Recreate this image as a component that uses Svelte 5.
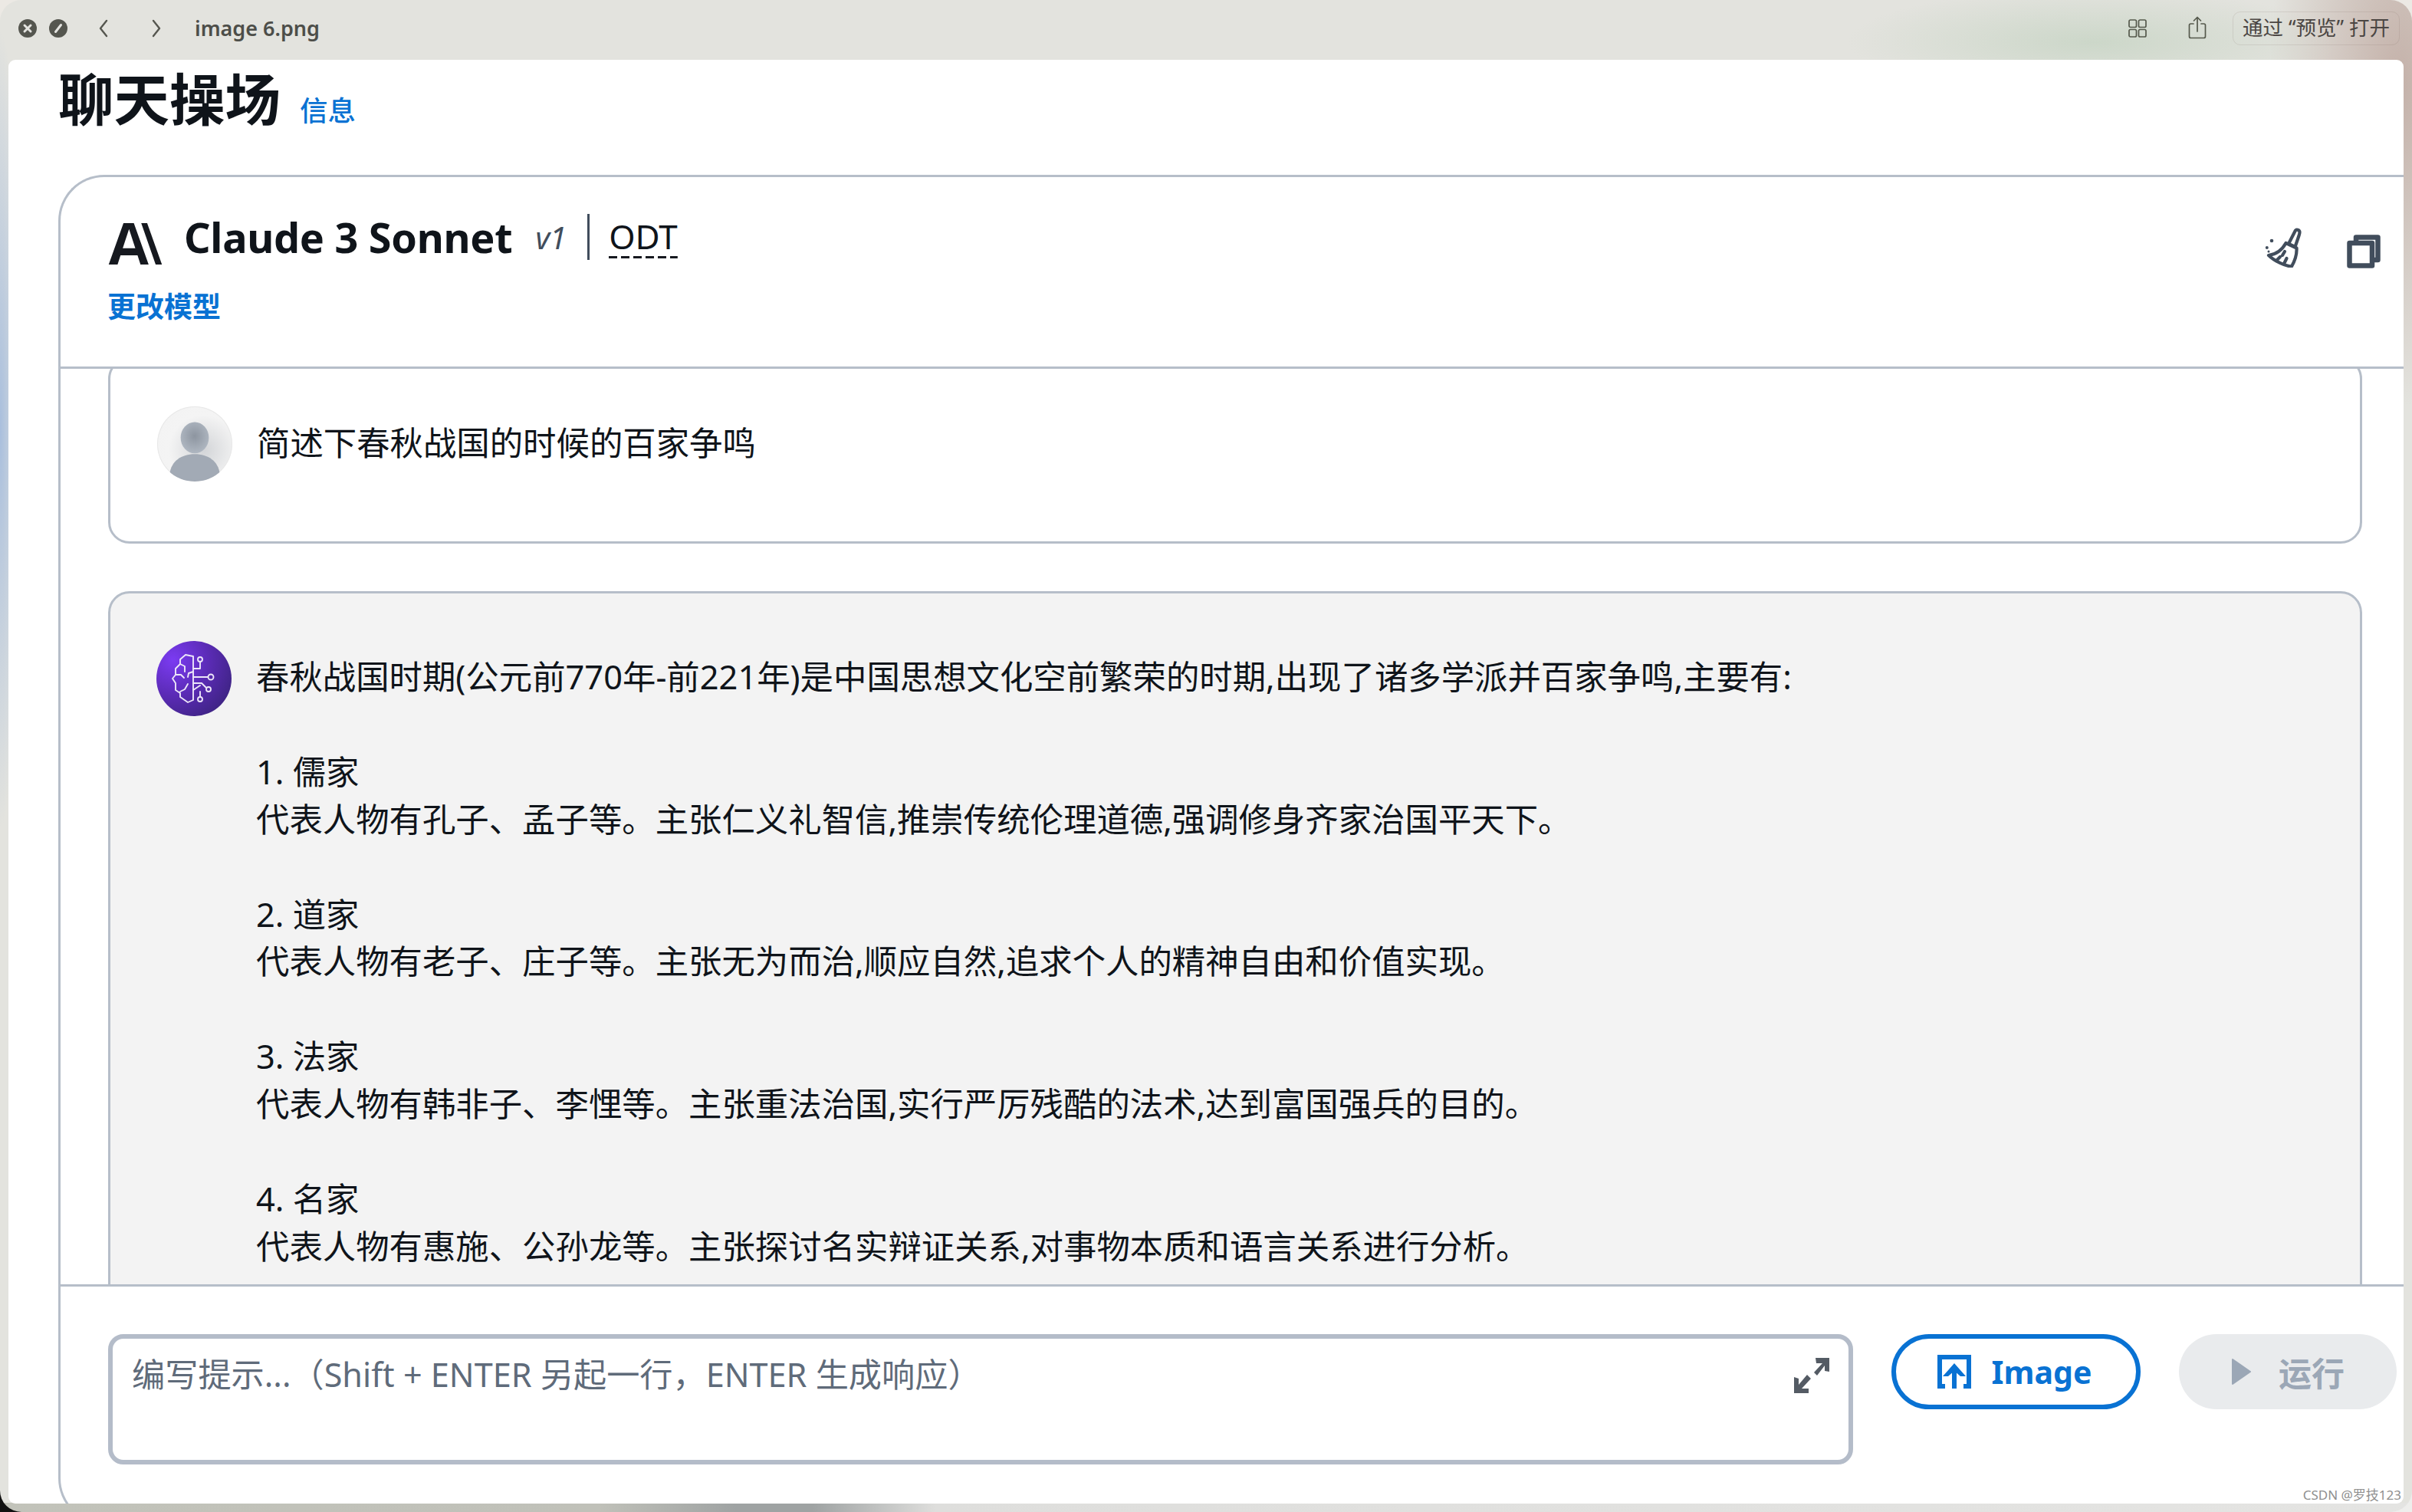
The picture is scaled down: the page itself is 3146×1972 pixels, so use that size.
<script>
  const answer = [
    '春秋战国时期(公元前770年-前221年)是中国思想文化空前繁荣的时期,出现了诸多学派并百家争鸣,主要有:',
    '',
    '1. 儒家',
    '代表人物有孔子、孟子等。主张仁义礼智信,推崇传统伦理道德,强调修身齐家治国平天下。',
    '',
    '2. 道家',
    '代表人物有老子、庄子等。主张无为而治,顺应自然,追求个人的精神自由和价值实现。',
    '',
    '3. 法家',
    '代表人物有韩非子、李悝等。主张重法治国,实行严厉残酷的法术,达到富国强兵的目的。',
    '',
    '4. 名家',
    '代表人物有惠施、公孙龙等。主张探讨名实辩证关系,对事物本质和语言关系进行分析。'
  ].join('\n');
</script>

<div class="window">
  <header class="titlebar">
    <span class="dot"><svg viewBox="0 0 24 24"><circle cx="12" cy="12" r="12" fill="#55564f"/><path d="M8 8l8 8M16 8l-8 8" stroke="#e4e4e0" stroke-width="3" stroke-linecap="round"/></svg></span>
    <span class="dot"><svg viewBox="0 0 24 24"><circle cx="12" cy="12" r="12" fill="#55564f"/><path d="M8.500 16.500l7-9" stroke="#e4e4e0" stroke-width="3" stroke-linecap="round"/></svg></span>
    <span class="chev first"><svg viewBox="0 0 16 26"><path d="M12 3L4 13l8 10" fill="none" stroke="#55564f" stroke-width="2.400" stroke-linecap="round" stroke-linejoin="round"/></svg></span>
    <span class="chev second"><svg viewBox="0 0 16 26"><path d="M4 3l8 10-8 10" fill="none" stroke="#55564f" stroke-width="2.400" stroke-linecap="round" stroke-linejoin="round"/></svg></span>
    <span class="filename">image 6.png</span>
    <span class="spacer"></span>
    <svg class="grid" viewBox="0 0 24 24"><g fill="none" stroke="#55594c" stroke-width="1.700"><rect x="1" y="1" width="9.500" height="9.500" rx="1.800"/><rect x="13.500" y="1" width="9.500" height="9.500" rx="1.800"/><rect x="1" y="13.500" width="9.500" height="9.500" rx="1.800"/><rect x="13.500" y="13.500" width="9.500" height="9.500" rx="1.800"/></g></svg>
    <svg class="share" viewBox="0 0 24 30"><g fill="none" stroke="#55594c" stroke-width="1.700" stroke-linecap="round" stroke-linejoin="round"><path d="M7 10H3.500A2 2 0 0 0 1.500 12v14.500a2 2 0 0 0 2 2h17a2 2 0 0 0 2-2V12a2 2 0 0 0-2-2H17"/><path d="M12 20V1.500M7.500 6L12 1.500 16.500 6"/></g></svg>
    <span class="open">通过 “预览” 打开</span>
  </header>

  <main class="page">
    <div class="heading">
      <h1>聊天操场</h1>
      <a class="info" href="#info">信息</a>
    </div>

    <section class="card">
      <div class="card-head">
        <div class="head-left">
          <div class="model">
            <svg class="logo" viewBox="0 0 72 56"><path fill="#16191f" d="M20 0h14l20 56H43l-4-12.500H16L12 56H0zM19 34h17L27.500 8z"/><path fill="#16191f" d="M44 0h8l20 56h-8.500z"/></svg>
            <span class="name">Claude 3 Sonnet</span>
            <span class="version">v1</span>
            <span class="divider"></span>
            <span class="odt">ODT</span>
          </div>
          <a class="change" href="#model">更改模型</a>
        </div>
        <div class="head-actions">
          <svg class="broom" viewBox="0 0 50 52"><g fill="none" stroke="#414d5c" stroke-width="4.200" stroke-linecap="round" stroke-linejoin="round"><path d="M40 3.500c2-1.700 5.500-.5 5.500 2.500 0 1.500-.6 3-1.200 5L39.500 25 31 21z"/><path d="M27.500 20l14 6.500c.5 8-2.500 17-6.500 24C26 50 12 43 5 36c8-1 17-6 22.500-16z"/><path d="M15 43l5-5M25 47l3.500-7M23 36l3-5"/></g><circle cx="9" cy="17" r="2.300" fill="#414d5c"/><circle cx="2.800" cy="26" r="2" fill="#414d5c"/><circle cx="5" cy="31" r="1.500" fill="#414d5c"/></svg>
          <svg class="copy" viewBox="0 0 44 44"><g fill="none" stroke="#414d5c" stroke-width="6.500" stroke-linejoin="round"><path d="M12 9V3.500h28.500V33H34"/><rect x="3.500" y="11" width="29.500" height="29.500"/></g></svg>
        </div>
      </div>

      <div class="messages">
        <article class="msg user">
          <div class="avatar person">
            <svg viewBox="0 0 96 96"><defs><radialGradient id="pg" cx="50%" cy="45%" r="60%"><stop offset="0" stop-color="#8d95a0"/><stop offset="1" stop-color="#b2bac4"/></radialGradient></defs><ellipse cx="48" cy="40" rx="18" ry="20" fill="url(#pg)"/><path d="M16 86c2-16 15-25 32-25s30 9 32 25c-8 7-18 10-32 10s-24-3-32-10z" fill="#a2aab5"/></svg>
          </div>
          <p>简述下春秋战国的时候的百家争鸣</p>
        </article>

        <article class="msg bot">
          <div class="avatar brain">
            <svg viewBox="0 0 98 98"><g fill="none" stroke="#ece6f8" stroke-width="1.900" stroke-linecap="round" stroke-linejoin="round"><path d="M48 20L38 18 31 24v6l-6 6v8l-4 5 4 6v9l6 4v5l10 7 7-3V20z"/><path d="M31 30l6 3v7M25 44h7l4 4M31 66l6-3 4-7M48 40l-6 2-1 5"/><path d="M48 36h9V27M48 47h19M48 55l11 0 6 6M48 64l9-6M57 66v7"/><circle cx="57" cy="24" r="3"/><circle cx="71" cy="47" r="3.500"/><circle cx="68" cy="63" r="3"/><circle cx="57" cy="76" r="3"/></g></svg>
          </div>
          <p class="answer">{answer}</p>
        </article>
      </div>

      <footer class="composer">
        <div class="prompt">
          <span>编写提示...（Shift + ENTER 另起一行，ENTER 生成响应）</span>
          <svg class="expand" viewBox="0 0 48 48"><g fill="#545b64"><path d="M29 1h18v18l-6-1V11L31 24l-4-4 11-12h-8z"/><path d="M1 47V26l6 2v8l11-13 5 5-12 13h9v6z"/></g></svg>
        </div>
        <button class="image"><svg viewBox="0 0 44 44"><g fill="none" stroke="#0972d3" stroke-width="6"><path d="M10 41H3V3h38v38h-7"/><path d="M22 44V18"/></g><path d="M22 11L7 28h7l8-7 8 7h7z" fill="#0972d3"/></svg><span>Image</span></button>
        <button class="run"><svg viewBox="0 0 26 36"><path d="M2 2l23 16L2 34z" fill="#9ba7b6" stroke="#9ba7b6" stroke-width="2" stroke-linejoin="round"/></svg><span>运行</span></button>
      </footer>
    </section>
    <span class="watermark">CSDN @罗技123</span>
  </main>
</div>

<style>
  :global(body) {
    margin: 0;
    background: linear-gradient(90deg, #111 0 100px, #eeeeec 100px) bottom / 100% 100px no-repeat, #ece9e4;
  }
  .window {
    width: 3146px;
    height: 1972px;
    box-sizing: border-box;
    padding: 0 11px 11px 11px;
    border-radius: 28px;
    overflow: hidden;
    display: flex;
    flex-direction: column;
    font-family: "Noto Sans", "Noto Sans CJK SC", sans-serif;
    color: #0f141a;
    background:
      radial-gradient(ellipse 320px 70px at 2730px 55px, #ccd7c9, transparent),
      radial-gradient(ellipse 170px 420px at 3130px 110px, #c4b1a9, transparent),
      radial-gradient(ellipse 30px 520px at 0 560px, #a9bfdd, transparent),
      linear-gradient(90deg, #c2c3ba 0, #c0c1b9 780px, #9fa3a3 960px, #9fa3a3 1060px, #dededc 1220px, #e4e4e2 100%) bottom / 100% 12px no-repeat,
      #e3e3de;
  }
  .titlebar {
    height: 78px;
    flex: none;
    display: flex;
    align-items: center;
    padding: 0 5px 5px 14px;
    box-sizing: border-box;
    margin-left: -1px;
  }
  .dot { width: 24px; height: 24px; margin-right: 16px; display: block; }
  .dot svg { display: block; width: 24px; height: 24px; }
  .chev { width: 16px; height: 26px; display: block; }
  .chev svg { display: block; width: 16px; height: 26px; }
  .chev.first { margin-left: 23px; }
  .chev.second { margin-left: 53px; }
  .filename { margin-left: 42px; font-size: 27px; font-weight: 600; color: #4d4e49; }
  .spacer { flex: 1; }
  .grid { width: 24px; height: 24px; }
  .share { width: 24px; height: 30px; margin-left: 54px; margin-bottom: 2px; }
  .open {
    margin-left: 34px;
    width: 218px;
    height: 44px;
    box-sizing: border-box;
    border: 1.500px solid rgba(120, 100, 95, .15);
    border-radius: 10px;
    font-size: 26.500px;
    line-height: 41px;
    text-align: center;
    white-space: nowrap;
    color: #4b4643;
  }

  .page {
    position: relative;
    flex: 1;
    min-height: 0;
    background: #fff;
    border-radius: 9px;
    overflow: hidden;
  }
  .heading {
    height: 150px;
    padding-left: 65px;
    box-sizing: border-box;
    display: flex;
    align-items: flex-start;
  }
  h1 { margin: 0; font-size: 72.500px; line-height: 102px; font-weight: 700; color: #0f141a; white-space: nowrap; }
  .info { margin: 41px 0 0 25px; font-size: 36.500px; line-height: 50px; color: #0972d3; text-decoration: none; font-weight: 500; }

  .card {
    margin-left: 65px;
    height: 1760px;
    box-sizing: border-box;
    border: 3px solid #b6bec9;
    border-right: 0;
    border-radius: 60px 0 0 60px;
    overflow: hidden;
  }
  .card-head {
    height: 250px;
    box-sizing: border-box;
    border-bottom: 3px solid #b6bec9;
    padding: 47px 28px 0 61px;
    display: flex;
    justify-content: space-between;
  }
  .head-left { display: flex; flex-direction: column; }
  .model { display: flex; align-items: center; height: 62px; }
  .logo { width: 73px; height: 54px; margin-top: 17px; }
  .name { margin-left: 27px; font-size: 54px; font-weight: 700; letter-spacing: -.3px; color: #0f141a; white-space: nowrap; }
  .version { margin-left: 30px; font-size: 40px; font-style: italic; color: #414d5c; }
  .divider { width: 3px; height: 60px; background: #414d5c; margin-left: 27px; }
  .odt {
    margin-left: 25px;
    font-size: 44px;
    line-height: 52px;
    padding-bottom: 3px;
    background: repeating-linear-gradient(90deg, #16191f 0 11px, transparent 11px 16px) bottom / 100% 3px no-repeat;
  }
  .change { margin-top: 35px; font-size: 37px; line-height: 50px; font-weight: 700; color: #0972d3; text-decoration: none; }
  .head-actions { display: flex; gap: 57px; align-items: flex-start; padding-top: 19px; }
  .broom { width: 50px; height: 52px; margin-left: -2px; }
  .copy { width: 44px; height: 44px; margin-top: 9px; margin-right: 2px; }

  .messages {
    height: 1194px;
    overflow: hidden;
    box-sizing: border-box;
    padding: 0 54px 0 62px;
  }
  .msg {
    border: 3px solid #b6bec9;
    border-radius: 28px;
    display: flex;
    align-items: flex-start;
    gap: 32px;
    box-sizing: border-box;
  }
  .msg p { margin: 0; font-size: 43.400px; line-height: 61.900px; white-space: pre-wrap; }
  .user { margin-top: -15px; height: 243px; padding: 61px 0 0 61px; }
  .user p { margin-top: 17px; }
  .bot { margin-top: 62px; height: 1200px; padding: 62px 0 0 60px; background: #f3f3f3; }
  .bot p { margin-top: 16px; }
  .avatar { flex: none; width: 98px; height: 98px; border-radius: 50%; overflow: hidden; }
  .avatar svg { display: block; width: 100%; height: 100%; }
  .person { background: radial-gradient(circle at 62% 58%, #d3d5d8 0, #f4f4f4 55%, #f2f2f2 100%); box-shadow: inset 0 0 0 1px #e8e8e8; }
  .brain { background: radial-gradient(circle at 22% 25%, #7b3bf2 0, #5a2bb4 45%, #3c2380 85%, #3a2770 100%); }

  .composer {
    border-top: 3px solid #b6bec9;
    padding: 62px 0 0 62px;
    display: flex;
    align-items: flex-start;
  }
  .prompt {
    width: 2276px;
    height: 170px;
    box-sizing: border-box;
    border: 6px solid #b4bcc9;
    border-radius: 20px;
    padding: 17px 0 0 25px;
    position: relative;
    font-size: 43.200px;
    line-height: 60px;
    color: #5f6b7a;
  }
  .expand { position: absolute; right: 24px; top: 24px; width: 48px; height: 48px; }
  button {
    height: 98px;
    box-sizing: border-box;
    border-radius: 49px;
    font: inherit;
    font-size: 41px;
    font-weight: 700;
    display: flex;
    align-items: center;
    justify-content: center;
    padding: 0;
  }
  .image { width: 325px; margin-left: 50px; border: 6px solid #0972d3; background: #fff; color: #0972d3; gap: 27px; padding-right: 4px; }
  .image svg { width: 44px; height: 44px; }
  .run { width: 284px; margin-left: 50px; border: 0; background: #e9ebed; color: #9ba7b6; gap: 36px; font-size: 43px; }
  .run svg { width: 26px; height: 36px; }
  .watermark { position: absolute; right: 3px; bottom: 1px; font-size: 17px; line-height: 20px; color: #8f8f8f; white-space: nowrap; }
</style>
